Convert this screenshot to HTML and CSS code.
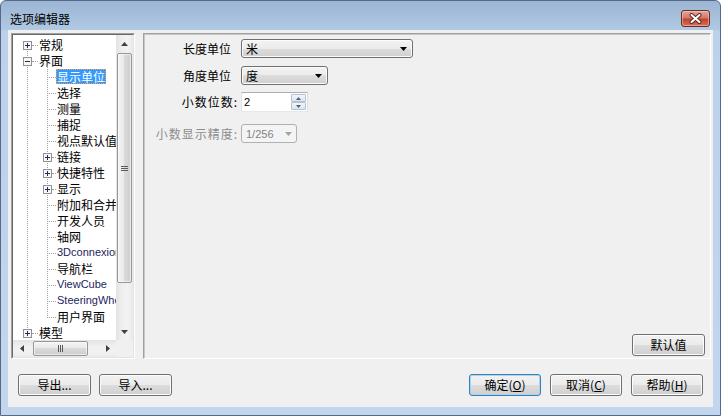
FILE: index.html
```html
<!DOCTYPE html>
<html lang="zh-CN">
<head>
<meta charset="utf-8">
<title>选项编辑器</title>
<link rel="stylesheet" href="styles.css">
</head>
<body>
<div class="window">
  <div class="titlebar">
    <span class="title">选项编辑器</span>
    <button class="close" aria-label="关闭">
      <svg width="13" height="11" viewBox="0 0 13 11"><path d="M2.5 2 L10.5 9 M10.5 2 L2.5 9" stroke="#5b2a22" stroke-width="4" stroke-linecap="round"/><path d="M2.5 2 L10.5 9 M10.5 2 L2.5 9" stroke="#ffffff" stroke-width="2" stroke-linecap="round"/></svg>
    </button>
  </div>
  <div class="client">
    <div class="main">
      <div class="treebox">
        <div class="treeinner">
          <div class="tree-area">
            <div class="tree-list">
              <ul class="tree">
                <li>
                  <div class="row root">
                    <svg class="exp" width="9" height="9" viewBox="0 0 9 9"><rect x="0.5" y="0.5" width="8" height="8" fill="#f6f6f6" stroke="#919191"/><path d="M2 4.5h5M4.5 2v5" stroke="#1e2f55"/></svg>
                    <span class="hl hl-root"></span><span class="label">常规</span>
                  </div>
                </li>
                <li>
                  <div class="row root">
                    <svg class="exp" width="9" height="9" viewBox="0 0 9 9"><rect x="0.5" y="0.5" width="8" height="8" fill="#f6f6f6" stroke="#919191"/><path d="M2 4.5h5" stroke="#1e2f55"/></svg>
                    <span class="hl hl-root"></span><span class="label">界面</span>
                  </div>
                  <ul class="children">
                    <li class="row leaf"><span class="hl hl-leaf"></span><span class="label sel">显示单位</span></li>
                    <li class="row leaf"><span class="hl hl-leaf"></span><span class="label">选择</span></li>
                    <li class="row leaf"><span class="hl hl-leaf"></span><span class="label">测量</span></li>
                    <li class="row leaf"><span class="hl hl-leaf"></span><span class="label">捕捉</span></li>
                    <li class="row leaf"><span class="hl hl-leaf"></span><span class="label">视点默认值</span></li>
                    <li class="row sub"><svg class="exp" width="9" height="9" viewBox="0 0 9 9"><rect x="0.5" y="0.5" width="8" height="8" fill="#f6f6f6" stroke="#919191"/><path d="M2 4.5h5M4.5 2v5" stroke="#1e2f55"/></svg><span class="hl hl-sub"></span><span class="label">链接</span></li>
                    <li class="row sub"><svg class="exp" width="9" height="9" viewBox="0 0 9 9"><rect x="0.5" y="0.5" width="8" height="8" fill="#f6f6f6" stroke="#919191"/><path d="M2 4.5h5M4.5 2v5" stroke="#1e2f55"/></svg><span class="hl hl-sub"></span><span class="label">快捷特性</span></li>
                    <li class="row sub"><svg class="exp" width="9" height="9" viewBox="0 0 9 9"><rect x="0.5" y="0.5" width="8" height="8" fill="#f6f6f6" stroke="#919191"/><path d="M2 4.5h5M4.5 2v5" stroke="#1e2f55"/></svg><span class="hl hl-sub"></span><span class="label">显示</span></li>
                    <li class="row leaf"><span class="hl hl-leaf"></span><span class="label">附加和合并</span></li>
                    <li class="row leaf"><span class="hl hl-leaf"></span><span class="label">开发人员</span></li>
                    <li class="row leaf"><span class="hl hl-leaf"></span><span class="label">轴网</span></li>
                    <li class="row leaf"><span class="hl hl-leaf"></span><span class="label en">3Dconnexion</span></li>
                    <li class="row leaf"><span class="hl hl-leaf"></span><span class="label">导航栏</span></li>
                    <li class="row leaf"><span class="hl hl-leaf"></span><span class="label en">ViewCube</span></li>
                    <li class="row leaf"><span class="hl hl-leaf"></span><span class="label en">SteeringWheels</span></li>
                    <li class="row leaf"><span class="hl hl-leaf"></span><span class="label">用户界面</span></li>
                  </ul>
                </li>
                <li>
                  <div class="row root">
                    <svg class="exp" width="9" height="9" viewBox="0 0 9 9"><rect x="0.5" y="0.5" width="8" height="8" fill="#f6f6f6" stroke="#919191"/><path d="M2 4.5h5M4.5 2v5" stroke="#1e2f55"/></svg>
                    <span class="hl hl-root"></span><span class="label">模型</span>
                  </div>
                </li>
              </ul>
            </div>
            <div class="vscroll">
              <div class="sarrow"><svg width="7" height="4" viewBox="0 0 7 4"><polygon points="0,4 7,4 3.5,0" fill="#404040"/></svg></div>
              <div class="vthumb"><svg width="7" height="5" viewBox="0 0 7 5"><path d="M0 0.5h7M0 2.5h7M0 4.5h7" stroke="#5a5a5a"/></svg></div>
              <div class="strack"></div>
              <div class="sarrow"><svg width="7" height="4" viewBox="0 0 7 4"><polygon points="0,0 7,0 3.5,4" fill="#404040"/></svg></div>
            </div>
          </div>
          <div class="hscroll-row">
            <div class="hscroll">
              <div class="sarrow"><svg width="4" height="7" viewBox="0 0 4 7"><polygon points="4,0 4,7 0,3.5" fill="#404040"/></svg></div>
              <div class="hthumb"><svg width="5" height="7" viewBox="0 0 5 7"><path d="M0.5 0v7M2.5 0v7M4.5 0v7" stroke="#5a5a5a"/></svg></div>
              <div class="strack"></div>
              <div class="sarrow"><svg width="4" height="7" viewBox="0 0 4 7"><polygon points="0,0 0,7 4,3.5" fill="#404040"/></svg></div>
            </div>
            <div class="corner"></div>
          </div>
        </div>
      </div>
      <div class="panel">
        <div class="form">
          <div class="field f1">
            <span class="flabel">长度单位</span>
            <div class="combo w-len"><span>米</span><svg width="7" height="4" viewBox="0 0 7 4"><polygon points="0,0 7,0 3.5,4" fill="#000"/></svg></div>
          </div>
          <div class="field f2">
            <span class="flabel">角度单位</span>
            <div class="combo w-ang"><span>度</span><svg width="7" height="4" viewBox="0 0 7 4"><polygon points="0,0 7,0 3.5,4" fill="#000"/></svg></div>
          </div>
          <div class="field f3">
            <span class="flabel colon">小数位数:</span>
            <div class="spin">
              <span class="spin-val">2</span>
              <div class="spin-btns">
                <div class="sb"><svg width="5" height="3" viewBox="0 0 5 3"><polygon points="0,3 5,3 2.5,0" fill="#4a5f86"/></svg></div>
                <div class="sb"><svg width="5" height="3" viewBox="0 0 5 3"><polygon points="0,0 5,0 2.5,3" fill="#4a5f86"/></svg></div>
              </div>
            </div>
          </div>
          <div class="field f4">
            <span class="flabel colon disabled">小数显示精度:</span>
            <div class="combo combo-dis"><span class="en-val">1/256</span><svg width="7" height="4" viewBox="0 0 7 4"><polygon points="0,0 7,0 3.5,4" fill="#a3a3a3"/></svg></div>
          </div>
        </div>
        <button class="btn btn-default">默认值</button>
      </div>
    </div>
    <div class="footer">
      <div class="group">
        <button class="btn">导出...</button>
        <button class="btn">导入...</button>
      </div>
      <div class="group group-right">
        <button class="btn primary">确定(<u>O</u>)</button>
        <button class="btn">取消(<u>C</u>)</button>
        <button class="btn">帮助(<u>H</u>)</button>
      </div>
    </div>
  </div>
</div>
</body>
</html>
```
FILE: styles.css
```css
* { box-sizing: border-box; }
html, body { margin: 0; padding: 0; }
body {
  width: 721px;
  height: 416px;
  overflow: hidden;
  background: #ffffff;
  font-family: "Noto Sans CJK SC", "Noto Sans", sans-serif;
  font-size: 12px;
  color: #000;
}
ul { list-style: none; margin: 0; padding: 0; }

.window {
  width: 721px;
  height: 416px;
  border: 1px solid #56698a;
  border-radius: 6px 6px 0 0;
  background: linear-gradient(#9bb5d3, #b0c9e4 29px, #bcd2ea 30px, #c2d6ed);
  padding: 0 7px 8px;
  display: flex;
  flex-direction: column;
}

.titlebar {
  flex: none;
  height: 29px;
  padding: 6px 0 0 2px;
  display: flex;
  align-items: center;
  justify-content: space-between;
}
.title { font-size: 12px; line-height: 16px; color: #000; }
.close {
  width: 29px;
  height: 17px;
  margin-right: 3px;
  padding: 0;
  border: 1px solid #6d2c22;
  border-radius: 3px;
  background: linear-gradient(#e3a69b, #d27a6a 45%, #c2432e 55%, #d66f58);
  box-shadow: inset 0 0 0 1px rgba(255, 220, 210, 0.45);
  display: flex;
  align-items: center;
  justify-content: center;
}

.client {
  flex: 1;
  background: #f0f0f0;
  display: flex;
  flex-direction: column;
}
.main {
  display: flex;
  gap: 8px;
  padding: 3px 2px 0 3px;
  height: 329px;
}

/* tree */
.treebox {
  width: 124px;
  height: 326px;
  border: 1px solid;
  border-color: #a0a0a0 #ffffff #ffffff #a0a0a0;
  flex: none;
}
.treeinner {
  height: 100%;
  border: 1px solid;
  border-color: #696969 #e3e3e3 #e3e3e3 #696969;
  display: flex;
  flex-direction: column;
}
.tree-area { display: flex; height: 305px; }
.tree-list {
  width: 103px;
  background: #ffffff;
  overflow: hidden;
  padding-top: 2px;
  white-space: nowrap;
}
.tree { position: relative; }
.tree::before {
  content: "";
  position: absolute;
  left: 14px;
  top: 8px;
  height: 289px;
  border-left: 1px dotted #a0a0a0;
}
.children { position: relative; }
.children::before {
  content: "";
  position: absolute;
  left: 34px;
  top: -3px;
  height: 252px;
  border-left: 1px dotted #a0a0a0;
}
.row {
  height: 16px;
  display: flex;
  align-items: flex-start;
}
.row.root { padding-left: 10px; }
.row.leaf { padding-left: 34px; }
.row.sub { padding-left: 30px; }
.exp {
  flex: none;
  margin-top: 4px;
  position: relative;
  z-index: 1;
  display: block;
}
.hl {
  flex: none;
  height: 0;
  margin-top: 8px;
  border-top: 1px dotted #a0a0a0;
}
.hl-root { width: 6px; }
.hl-leaf { width: 9px; }
.hl-sub { width: 4px; }
.label {
  height: 15px;
  line-height: 15px;
  padding: 0 1px;
}
.label.sel {
  background: #3399ff;
  color: #ffffff;
  outline: 1px dotted #f2a33a;
  outline-offset: -1px;
}
.label.en {
  font-family: "Liberation Sans", Arial, sans-serif;
  font-size: 11px;
  color: #1c2560;
}

/* scrollbars */
.vscroll {
  width: 17px;
  display: flex;
  flex-direction: column;
  background: linear-gradient(to right, #e3e3e3, #efefef 35%, #f2f2f2 70%, #e9e9e9);
}
.sarrow {
  flex: none;
  width: 17px;
  height: 17px;
  display: flex;
  align-items: center;
  justify-content: center;
}
.vthumb {
  flex: none;
  height: 230px;
  margin: 1px 1px 0;
  border: 1px solid #979797;
  border-radius: 2px;
  background: linear-gradient(to right, #f4f4f4, #e8e8e8 50%, #dadada 50%, #cdcdcd);
  box-shadow: inset 0 0 0 1px rgba(255, 255, 255, 0.6);
  display: flex;
  align-items: center;
  justify-content: center;
}
.strack { flex: 1; }
.hscroll-row { display: flex; height: 17px; }
.hscroll {
  width: 103px;
  display: flex;
  background: linear-gradient(#e3e3e3, #efefef 35%, #f2f2f2 70%, #e9e9e9);
}
.hthumb {
  flex: none;
  width: 55px;
  margin: 1px 0 1px 3px;
  border: 1px solid #979797;
  border-radius: 2px;
  background: linear-gradient(#f4f4f4, #e8e8e8 50%, #dadada 50%, #cdcdcd);
  box-shadow: inset 0 0 0 1px rgba(255, 255, 255, 0.6);
  display: flex;
  align-items: center;
  justify-content: center;
}
.corner { width: 17px; background: #f0f0f0; }

/* right panel */
.panel {
  flex: 1;
  height: 326px;
  border: 1px solid;
  border-color: #a0a0a0 #ffffff #ffffff #a0a0a0;
  box-shadow: inset 1px 1px 0 #c8c8c8;
  display: flex;
  flex-direction: column;
  padding-top: 5px;
}
.form { display: flex; flex-direction: column; }
.field { display: flex; align-items: center; }
.f1 { height: 19px; }
.f2 { height: 19px; margin-top: 8px; }
.f3 { height: 20px; margin-top: 7px; }
.f4 { height: 19px; margin-top: 12px; }
.flabel {
  width: 95px;
  margin-right: 2px;
  text-align: right;
  padding-right: 8px;
  white-space: nowrap;
  line-height: 16px;
}
.flabel.colon { padding-right: 1px; letter-spacing: 1px; }
.flabel.disabled { color: #8d8d8d; }

.combo {
  height: 19px;
  border: 1px solid #707070;
  border-radius: 3px;
  background: linear-gradient(#f3f3f3, #ebebeb 50%, #dddddd 50%, #cfcfcf);
  box-shadow: inset 0 0 0 1px #fbfbfb;
  display: flex;
  align-items: center;
  justify-content: space-between;
  padding: 0 5px 0 4px;
  line-height: 16px;
}
.combo svg { display: block; }
.w-len { width: 172px; }
.w-ang { width: 87px; }
.combo-dis {
  width: 56px;
  border-color: #adb2b5;
  background: #f4f4f4;
  box-shadow: none;
  color: #838383;
  padding-right: 4px;
}
.en-val, .spin-val {
  font-family: "Liberation Sans", Arial, sans-serif;
  font-size: 11px;
}
.spin {
  width: 67px;
  height: 20px;
  border: 1px solid;
  border-color: #abadb3 #dbdfe6 #e3e9ef #e2e3ea;
  background: #ffffff;
  display: flex;
  align-items: center;
  padding: 1px 1px 1px 2px;
}
.spin-val { flex: 1; color: #000; }
.spin-btns {
  width: 15px;
  height: 100%;
  display: flex;
  flex-direction: column;
}
.sb {
  flex: 1;
  border: 1px solid #b8c2cf;
  border-radius: 1px;
  background: linear-gradient(#f3f6fa, #dce4ee);
  display: flex;
  align-items: center;
  justify-content: center;
}
.sb svg { display: block; }

.btn {
  width: 73px;
  height: 22px;
  padding: 0;
  border: 1px solid #707070;
  border-radius: 3px;
  background: linear-gradient(#f2f2f2, #ebebeb 50%, #dddddd 50%, #cfcfcf);
  box-shadow: inset 0 0 0 1px #fcfcfc;
  font-family: "Noto Sans CJK SC", "Noto Sans", sans-serif;
  font-size: 12px;
  line-height: 16px;
  color: #000;
  text-align: center;
}
.btn u { text-decoration: underline; text-underline-offset: 1px; }
.btn-default {
  margin-top: auto;
  margin-bottom: 2px;
  align-self: flex-end;
  margin-right: 5px;
}
.btn.primary {
  border-color: #3c7fb1;
  box-shadow: inset 0 0 0 1px #a6d6f3;
}

.footer {
  display: flex;
  justify-content: space-between;
  padding: 0 10px;
  margin-top: 15px;
}
.group { display: flex; gap: 8px; }
.group-right { gap: 9px; }
.group-right .btn { width: 72px; }
```
